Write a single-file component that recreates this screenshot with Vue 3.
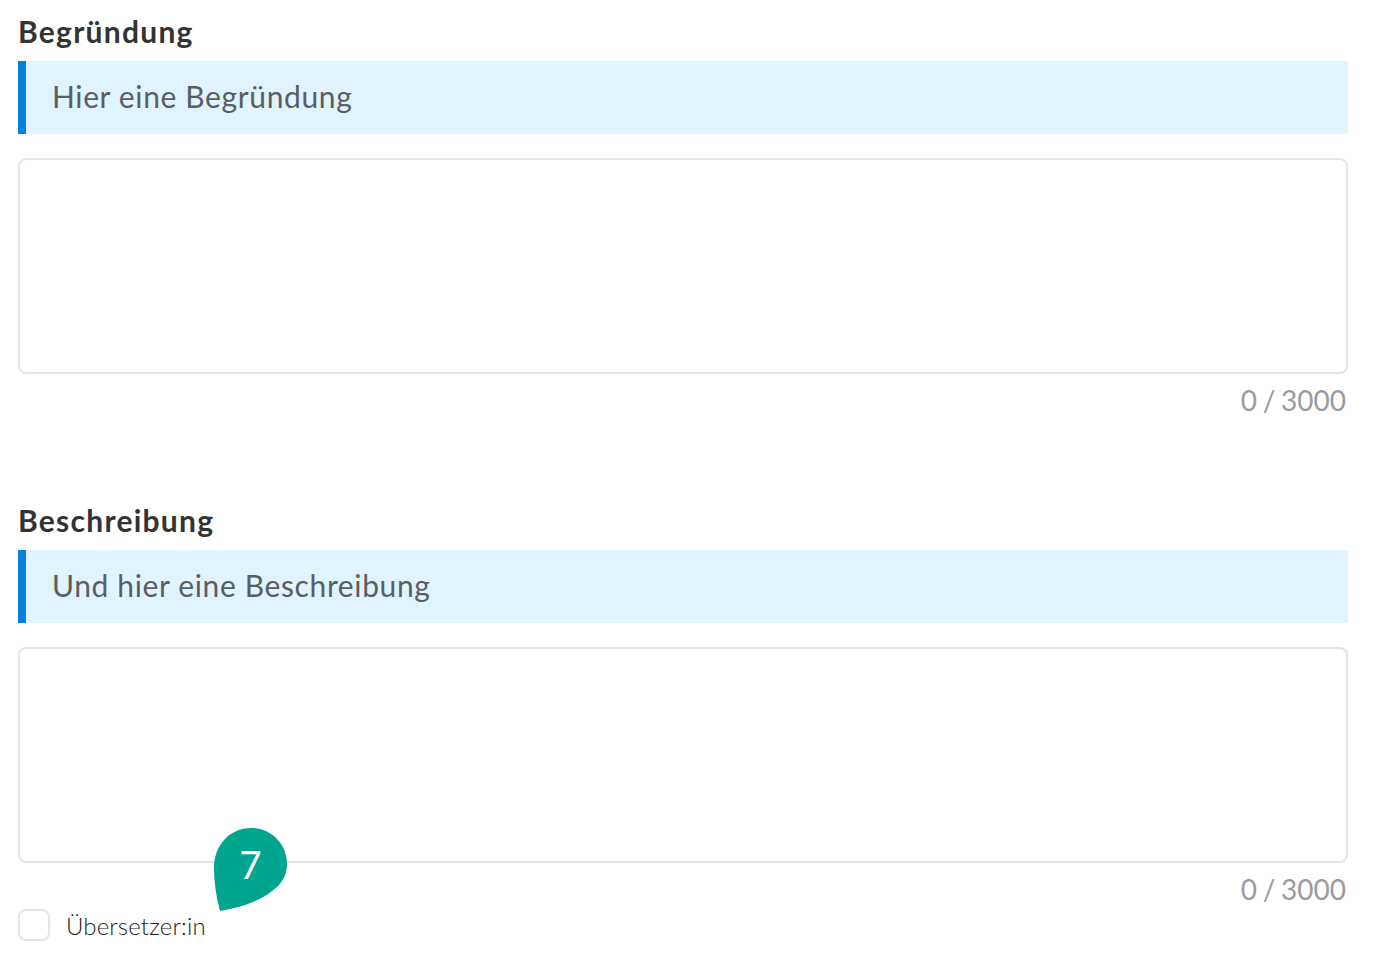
<template>
  <div class="page">
    <section v-for="field in fields" :key="field.label" class="field">
      <h2 class="label">{{ field.label }}</h2>
      <div class="hint">{{ field.hint }}</div>
      <textarea class="input"></textarea>
      <div class="counter">0 / 3000</div>
    </section>

    <label class="check">
      <span class="box"></span>
      <span class="check-text">Übersetzer:in</span>
      <span class="marker">
        <svg width="73" height="83" viewBox="0 0 73 83">
          <path d="M37 0C57 0 73 16 73 36C73 47 68 56 58 63C46 73 28 79 6 83C2 68 0 54 0 40C0 17 16 0 37 0Z" fill="#00a58e" />
        </svg>
        <span class="marker-num">7</span>
      </span>
    </label>
  </div>
</template>

<script setup>
const fields = [
  { label: 'Begründung', hint: 'Hier eine Begründung' },
  { label: 'Beschreibung', hint: 'Und hier eine Beschreibung' },
];
</script>

<style>
html,
body {
  background: #fff;
}
</style>

<style scoped>
.page {
  width: 1330px;
  height: 974px;
  margin-left: 18px;
  padding-top: 13px;
  box-sizing: border-box;
  font-family: Lato, "Open Sans", sans-serif;
}

.field {
  margin-bottom: 88px;
}

.field:last-of-type {
  margin-bottom: 0;
}

.label {
  margin: 0 0 12px;
  height: 36px;
  line-height: 36px;
  font-size: 30px;
  letter-spacing: 1.25px;
  font-weight: 700;
  color: #333;
}

.hint {
  height: 73px;
  line-height: 71px;
  padding-left: 26px;
  border-left: 8px solid #0480dd;
  background: #e0f3ff;
  font-size: 30px;
  letter-spacing: 0.63px;
  color: #5b5e60;
}

.input {
  display: block;
  width: 100%;
  height: 216px;
  margin-top: 24px;
  box-sizing: border-box;
  border: 2px solid #e6e6e6;
  border-radius: 8px;
  resize: none;
  outline: none;
}

.counter {
  height: 40px;
  padding-right: 2px;
  text-align: right;
  line-height: 52px;
  font-size: 28px;
  word-spacing: -1.5px;
  color: #9b9b9b;
}

.check {
  position: relative;
  display: flex;
  align-items: center;
  gap: 16px;
  margin-top: 6px;
}

.box {
  width: 32px;
  height: 32px;
  box-sizing: border-box;
  border: 2px solid #e6e6e6;
  border-radius: 8px;
}

.check-text {
  font-size: 24px;
  letter-spacing: 0.15px;
  font-weight: 300;
  color: #222;
}

.marker {
  position: absolute;
  left: 196px;
  top: -81px;
  width: 73px;
  height: 83px;
}

.marker svg {
  display: block;
}

.marker-num {
  position: absolute;
  left: 0;
  top: 12px;
  width: 73px;
  text-align: center;
  font-size: 38px;
  line-height: 48px;
  color: #fff;
}
</style>
